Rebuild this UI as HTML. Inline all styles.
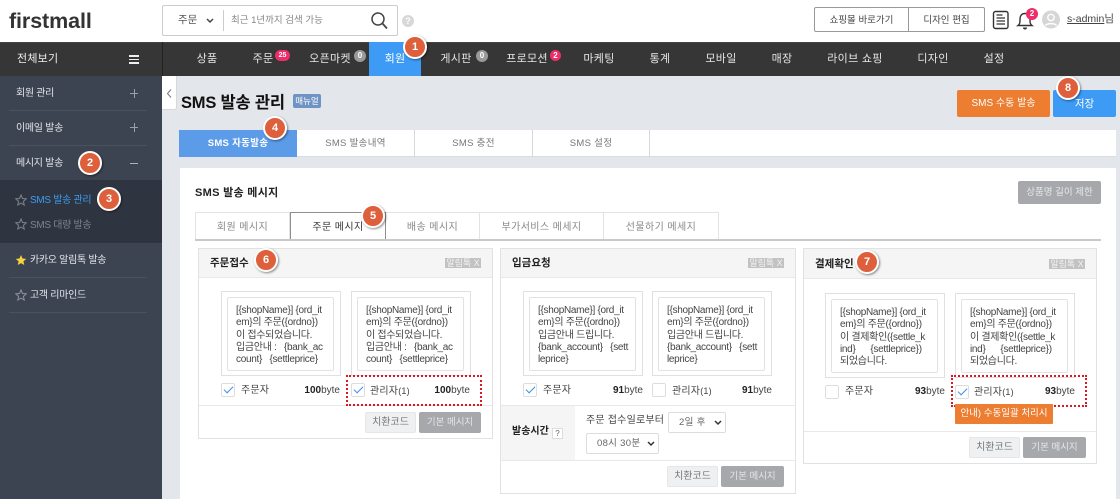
<!DOCTYPE html>
<html lang="ko"><head><meta charset="utf-8"><style>
html,body{margin:0;padding:0;width:1120px;height:499px;overflow:hidden;background:#e3e6ea}
body{position:relative;font-family:"Liberation Sans","Noto Sans CJK KR",sans-serif;font-size:11px;color:#333}
div,span.a,svg.a{position:absolute;box-sizing:border-box}
.c{text-align:center}
.w{white-space:nowrap}
.n{top:42px;height:34px;line-height:34px;color:#e6e6e6;font-size:11px;white-space:nowrap;transform:translateX(-50%);letter-spacing:.3px}
.s{left:16px;color:#e4e6ea;font-size:10px;white-space:nowrap;letter-spacing:-.3px}
.hr{left:9px;width:138px;height:1px;background:#4a5260}
.num{width:24px;height:24px;border-radius:50%;background:#dd5f3c;border:2px solid #fff;color:#fff;font-size:11px;font-weight:bold;text-align:center;line-height:20px;box-shadow:1px 1px 2px rgba(0,0,0,.45);z-index:5;transform:translate(-50%,-50%)}
.tab{top:130px;height:27px;line-height:27px;text-align:center;font-size:9.5px;color:#777;border-right:1px solid #d8d8d8;letter-spacing:.3px}
.sub{top:212px;height:28px;line-height:29px;text-align:center;font-size:10px;color:#888;border:1px solid #e3e3e3;border-left:0;border-bottom:0;letter-spacing:.4px}
.card{background:#fff;border:1px solid #e2e2e2;top:248px}
.hd{left:0;top:0;right:0;background:#f5f5f5;border-bottom:1px solid #e8e8e8}
.ttl{font-weight:bold;font-size:10.5px;color:#222;white-space:nowrap}
.tag{background:#c2c2c2;color:#f2f2f2;font-size:9px;height:10px;line-height:10px;width:36px;text-align:center;white-space:nowrap;overflow:hidden}
.o{border:1px solid #e0e0e0;width:120px;height:85px;background:#fff}
.i{left:5px;top:5px;width:107px;height:74px;border:1px solid #e2e2e2;border-radius:2px;padding:7px 0 0 8px;font-size:10px;letter-spacing:-.3px;line-height:12.35px;color:#444;white-space:nowrap}
.cb{width:14px;height:14px;border:1px solid #ddd;border-radius:2px;background:#fff}
.cb.on::after{content:"";position:absolute;left:2px;top:2px;width:8px;height:4px;border-left:1.5px solid #3a8ee8;border-bottom:1.5px solid #3a8ee8;transform:rotate(-45deg)}
.lb{font-size:10px;color:#444;white-space:nowrap;letter-spacing:.2px}
.by{font-size:10px;color:#444;white-space:nowrap;text-align:right}
.by b{color:#222}
.dv{height:1px;background:#e8e8e8}
.b1,.b2{height:21px;line-height:21px;border-radius:2px;text-align:center;font-size:10px;white-space:nowrap}
.b1{background:#eef0f2;color:#777;border:1px solid #e4e6e8;line-height:19px}
.b2{background:#a6a8ac;color:#e6e6e6;font-size:9.5px}
.red{border:2px dotted #d71920;z-index:3}
.sel{border:1px solid #ddd;border-radius:2px;background:#fff;height:21px;line-height:19px;font-size:9.5px;color:#666;letter-spacing:.3px}
.sel svg{position:absolute;right:3px;top:7px}
</style></head><body>

<div style="left:0;top:0;width:1120px;height:42px;background:#fff"></div>
<div class="w" style="left:9px;top:6px;font-size:21.5px;line-height:30px;font-weight:bold;color:#333;letter-spacing:-.1px">firstmall</div>

<div style="left:162px;top:5px;width:236px;height:31px;border:1px solid #ccc;border-radius:2px;background:#fff"></div>
<div class="w" style="left:178px;top:5px;line-height:31px;font-size:10.5px;color:#555">주문</div>
<svg class="a" style="left:206px;top:18px" width="8" height="6" viewBox="0 0 8 6"><path d="M1 1l3 3 3-3" fill="none" stroke="#444" stroke-width="1.5"/></svg>
<div style="left:223px;top:10px;width:1px;height:21px;background:#ccc"></div>
<div class="w" style="left:231px;top:5px;line-height:31px;font-size:9.5px;color:#888">최근 1년까지 검색 가능</div>
<svg class="a" style="left:370px;top:11px" width="18" height="19" viewBox="0 0 18 19"><circle cx="8" cy="8" r="6" fill="none" stroke="#444" stroke-width="1.5"/><path d="M12.5 12.5l4.5 5" stroke="#444" stroke-width="1.7"/></svg>
<div class="c" style="left:402px;top:15px;width:12px;height:12px;border-radius:50%;background:#d8d8d8;color:#fff;font-size:9px;font-weight:bold;line-height:12px">?</div>

<div style="left:814px;top:7px;width:171px;height:25px;border:1px solid #999;border-radius:2px;background:#fff"></div>
<div style="left:908px;top:7px;width:1px;height:25px;background:#999"></div>
<div class="c w" style="left:815px;top:8px;width:93px;line-height:25px;font-size:9.5px;color:#444">쇼핑몰 바로가기</div>
<div class="c w" style="left:909px;top:8px;width:75px;line-height:25px;font-size:9.5px;color:#444">디자인 편집</div>
<svg class="a" style="left:992px;top:10px" width="18" height="20" viewBox="0 0 18 20"><rect x="1.5" y="1.5" width="14.5" height="17" rx="2" fill="#fff" stroke="#333" stroke-width="1.4"/><path d="M4.500 5h6M4.500 8h8.500M4.500 11h8.500M4.500 14h8.500" stroke="#333" stroke-width="1.200"/></svg>
<svg class="a" style="left:1016px;top:9px" width="18" height="21" viewBox="0 0 18 21"><path d="M2 16.5c2-1.500 2-3 2-6.500 0-3.500 2-5.500 5-5.500s5 2 5 5.500c0 3.500 0 5 2 6.500z" fill="#fff" stroke="#333" stroke-width="1.4"/><path d="M7 18.500a2 2 0 004 0z" fill="#333"/></svg>
<div class="c" style="left:1026px;top:8px;width:12px;height:12px;border-radius:50%;background:#ef2d6b;color:#fff;font-size:8px;font-weight:bold;line-height:12px">2</div>
<svg class="a" style="left:1042px;top:10px" width="18" height="19" viewBox="0 0 18 19"><circle cx="9" cy="9.500" r="9" fill="#d6d6d6"/><circle cx="9" cy="7.500" r="3.200" fill="none" stroke="#fff" stroke-width="1.400"/><path d="M3.500 15.500c1.500-2.500 9.500-2.500 11 0" fill="none" stroke="#fff" stroke-width="1.600"/></svg>
<div class="w" style="left:1067px;top:11px;line-height:16px;font-size:10.5px;color:#444"><span style="text-decoration:underline">s-admin</span>님</div>

<div style="left:0;top:42px;width:1120px;height:34px;background:#363636;border-top:1px solid #444"></div>
<div class="w" style="left:17px;top:42px;line-height:34px;color:#eee;font-size:11px;letter-spacing:.2px">전체보기</div>
<div style="left:129px;top:55px;width:10px;height:1.500px;background:#eee"></div>
<div style="left:129px;top:58.500px;width:10px;height:1.500px;background:#eee"></div>
<div style="left:129px;top:62px;width:10px;height:1.500px;background:#eee"></div>
<div style="left:162px;top:42px;width:1px;height:34px;background:#222"></div>
<div style="left:369px;top:42px;width:52px;height:34px;background:#3d9bf5"></div>

<div class="n" style="left:207px">상품</div>
<div class="n" style="left:263px">주문</div>
<div class="c" style="left:275px;top:50px;width:15px;height:11px;border-radius:6px;background:#ef2d6b;color:#fff;font-size:7px;font-weight:bold;line-height:11px">25</div>
<div class="n" style="left:330px">오픈마켓</div>
<div class="c" style="left:354px;top:50px;width:12px;height:12px;border-radius:50%;background:#9a9a9a;color:#fff;font-size:8px;font-weight:bold;line-height:12px">0</div>
<div class="n" style="left:395px;color:#fff">회원</div>
<div class="n" style="left:456px">게시판</div>
<div class="c" style="left:476px;top:50px;width:12px;height:12px;border-radius:50%;background:#9a9a9a;color:#fff;font-size:8px;font-weight:bold;line-height:12px">0</div>
<div class="n" style="left:527px">프로모션</div>
<div class="c" style="left:550px;top:50px;width:11px;height:11px;border-radius:50%;background:#ef2d6b;color:#fff;font-size:8px;font-weight:bold;line-height:11px">2</div>
<div class="n" style="left:599px">마케팅</div>
<div class="n" style="left:660px">통계</div>
<div class="n" style="left:721px">모바일</div>
<div class="n" style="left:782px">매장</div>
<div class="n" style="left:855px">라이브 쇼핑</div>
<div class="n" style="left:933px">디자인</div>
<div class="n" style="left:994px">설정</div>

<div style="left:0;top:76px;width:162px;height:423px;background:#3c4452"></div>
<div class="s" style="top:85px;line-height:18px">회원 관리</div>
<div style="left:130px;top:93px;width:8px;height:1px;background:#9aa0aa"></div><div style="left:134px;top:89px;width:1px;height:9px;background:#9aa0aa"></div>
<div class="hr" style="top:110px"></div>
<div class="s" style="top:120px;line-height:18px">이메일 발송</div>
<div style="left:130px;top:127px;width:8px;height:1px;background:#9aa0aa"></div><div style="left:134px;top:123px;width:1px;height:9px;background:#9aa0aa"></div>
<div class="hr" style="top:145px"></div>
<div class="s" style="top:155px;line-height:18px">메시지 발송</div>
<div style="left:130px;top:163px;width:8px;height:1px;background:#aab0ba"></div>
<div style="left:0;top:180px;width:162px;height:63px;background:#2f3540"></div>
<svg class="a" style="left:15px;top:194px" width="12" height="12" viewBox="0 0 24 24"><path d="M12 2l3 7 7.500.7-5.700 5 1.700 7.300L12 18.200 5.500 22l1.700-7.300-5.700-5L9 9z" fill="none" stroke="#7d838d" stroke-width="2"/></svg>
<div class="w" style="left:30px;top:192px;line-height:18px;font-size:10px;color:#3d9bf5;letter-spacing:-.3px">SMS 발송 관리</div>
<svg class="a" style="left:15px;top:218px" width="12" height="12" viewBox="0 0 24 24"><path d="M12 2l3 7 7.500.7-5.700 5 1.700 7.300L12 18.200 5.500 22l1.700-7.300-5.700-5L9 9z" fill="none" stroke="#7d838d" stroke-width="2"/></svg>
<div class="w" style="left:30px;top:217px;line-height:18px;font-size:10px;color:#7d838d;letter-spacing:-.3px">SMS 대량 발송</div>
<svg class="a" style="left:15px;top:254px" width="12" height="12" viewBox="0 0 24 24"><path d="M12 2l3 7 7.500.7-5.700 5 1.700 7.300L12 18.200 5.500 22l1.700-7.300-5.700-5L9 9z" fill="#f7d23e"/></svg>
<div class="s" style="left:30px;top:252px;line-height:18px">카카오 알림톡 발송</div>
<div class="hr" style="top:277px"></div>
<svg class="a" style="left:15px;top:289px" width="12" height="12" viewBox="0 0 24 24"><path d="M12 2l3 7 7.500.7-5.700 5 1.700 7.300L12 18.200 5.500 22l1.700-7.300-5.700-5L9 9z" fill="none" stroke="#8d939d" stroke-width="2"/></svg>
<div class="s" style="left:30px;top:287px;line-height:18px">고객 리마인드</div>
<div class="hr" style="top:312px"></div>

<div style="left:162px;top:76px;width:15px;height:34px;background:#fff;border:1px solid #d8d8d8;border-left:0;border-top:0;border-radius:0 0 3px 0"></div>
<svg class="a" style="left:166px;top:89px" width="7" height="9" viewBox="0 0 7 9"><path d="M5 .5L1.500 4.500 5 8.500" fill="none" stroke="#777" stroke-width="1"/></svg>
<div class="w" style="left:181px;top:90px;line-height:27px;font-size:16.5px;font-weight:bold;color:#111;letter-spacing:-.2px">SMS 발송 관리</div>
<div class="c w" style="left:293px;top:94px;width:28px;height:14px;line-height:14px;background:#6f93c2;color:#fff;font-size:8.500px;border-radius:2px">매뉴얼</div>
<div class="c w" style="left:957px;top:90px;width:93px;height:27px;line-height:28px;background:#ed7d31;color:#fff;border-radius:2px;font-size:10px">SMS 수동 발송</div>
<div class="c w" style="left:1053px;top:90px;width:63px;height:27px;line-height:28px;background:#3d9bf5;color:#fff;border-radius:2px;font-size:10.5px">저장</div>

<div style="left:179px;top:130px;width:937px;height:27px;background:#fff;border-bottom:1px solid #ddd"></div>
<div class="tab" style="left:179px;width:118px;background:#5b9be8;color:#fff;font-weight:bold;border:0">SMS 자동발송</div>
<div class="tab" style="left:297px;width:118px">SMS 발송내역</div>
<div class="tab" style="left:415px;width:118px">SMS 충전</div>
<div class="tab" style="left:533px;width:117px">SMS 설정</div>

<div style="left:180px;top:168px;width:936px;height:331px;background:#fff"></div>
<div class="w" style="left:195px;top:184px;line-height:18px;font-size:11px;font-weight:bold;color:#222;letter-spacing:.3px">SMS 발송 메시지</div>
<div class="c w" style="left:1018px;top:181px;width:83px;height:23px;line-height:23px;background:#a6a8ac;color:#e8e8e8;border-radius:2px;font-size:9.5px">상품명 길이 제한</div>

<div class="sub" style="left:195px;width:95px;border-left:1px solid #e3e3e3">회원 메시지</div>
<div class="sub" style="left:290px;width:96px;border:1px solid #8f8f8f;border-bottom:0;background:#fff;color:#333;z-index:1">주문 메시지</div>
<div class="sub" style="left:386px;width:94px">배송 메시지</div>
<div class="sub" style="left:480px;width:124px">부가서비스 메세지</div>
<div class="sub" style="left:604px;width:115px">선물하기 메세지</div>
<div style="left:195px;top:239px;width:906px;height:2px;background:#c9c9c9;z-index:2"></div>

<!-- Card 1 -->
<div class="card" style="left:198px;width:295px;height:191px">
  <div class="hd" style="height:29px"></div>
  <div class="ttl" style="left:11px;top:5px;line-height:18px">주문접수</div>
  <div class="tag" style="left:246px;top:9px">알림톡 X</div>
  <div class="o" style="left:22px;top:42px"><div class="i">[{shopName}] {ord_it<br>em}의 주문({ordno})<br>이 접수되었습니다.<br>입금안내 :&nbsp;&nbsp;&nbsp;{bank_ac<br>count}&nbsp;&nbsp;&nbsp;{settleprice}</div></div>
  <div class="o" style="left:152px;top:42px"><div class="i">[{shopName}] {ord_it<br>em}의 주문({ordno})<br>이 접수되었습니다.<br>입금안내 :&nbsp;&nbsp;&nbsp;{bank_ac<br>count}&nbsp;&nbsp;&nbsp;{settleprice}</div></div>
  <div class="cb on" style="left:22px;top:134px"></div>
  <div class="lb" style="left:42px;top:134px;line-height:16px">주문자</div>
  <div class="by" style="left:79px;top:134px;width:62px;line-height:16px"><b>100</b>byte</div>
  <div class="cb on" style="left:152px;top:134px"></div>
  <div class="lb" style="left:171px;top:134px;line-height:16px">관리자<span style="font-size:9px">(1)</span></div>
  <div class="by" style="left:209px;top:134px;width:62px;line-height:16px"><b>100</b>byte</div>
  <div class="dv" style="left:0;top:156px;width:293px"></div>
  <div class="b1" style="left:166px;top:163px;width:51px">치환코드</div>
  <div class="b2" style="left:220px;top:163px;width:62px">기본 메시지</div>
</div>
<div class="red" style="left:346px;top:375px;width:136px;height:31px"></div>

<!-- Card 2 -->
<div class="card" style="left:500px;width:296px;height:246px">
  <div class="hd" style="height:29px"></div>
  <div class="ttl" style="left:11px;top:5px;line-height:18px">입금요청</div>
  <div class="tag" style="left:247px;top:9px">알림톡 X</div>
  <div class="o" style="left:22px;top:42px"><div class="i">[{shopName}] {ord_it<br>em}의 주문({ordno})<br>입금안내 드립니다.<br>{bank_account}&nbsp;&nbsp;&nbsp;{sett<br>leprice}</div></div>
  <div class="o" style="left:151px;top:42px"><div class="i">[{shopName}] {ord_it<br>em}의 주문({ordno})<br>입금안내 드립니다.<br>{bank_account}&nbsp;&nbsp;&nbsp;{sett<br>leprice}</div></div>
  <div class="cb on" style="left:22px;top:134px"></div>
  <div class="lb" style="left:42px;top:134px;line-height:16px">주문자</div>
  <div class="by" style="left:80px;top:134px;width:62px;line-height:16px"><b>91</b>byte</div>
  <div class="cb" style="left:151px;top:134px"></div>
  <div class="lb" style="left:171px;top:134px;line-height:16px">관리자<span style="font-size:9px">(1)</span></div>
  <div class="by" style="left:209px;top:134px;width:62px;line-height:16px"><b>91</b>byte</div>
  <div style="left:0;top:156px;width:74px;height:55px;background:#f5f5f5"></div>
  <div class="dv" style="left:0;top:156px;width:294px"></div>
  <div class="dv" style="left:0;top:211px;width:294px"></div>
  <div class="ttl" style="left:11px;top:175px;line-height:16px;font-size:10px">발송시간</div>
  <div class="c" style="left:51px;top:179px;width:11px;height:11px;border:1px solid #ddd;font-size:8px;line-height:9px;color:#666;background:#fff">?</div>
  <div class="w" style="left:85px;top:164px;line-height:16px;font-size:10px;color:#444;letter-spacing:.2px">주문 접수일로부터</div>
  <div class="sel" style="left:167px;top:163px;width:58px;padding-left:10px">2일 후<svg width="8" height="6" viewBox="0 0 8 6"><path d="M1 1l3 3 3-3" fill="none" stroke="#333" stroke-width="1.500"/></svg></div>
  <div class="sel" style="left:85px;top:184px;width:73px;padding-left:10px">08시 30분<svg width="8" height="6" viewBox="0 0 8 6"><path d="M1 1l3 3 3-3" fill="none" stroke="#333" stroke-width="1.500"/></svg></div>
  <div class="b1" style="left:166px;top:217px;width:51px">치환코드</div>
  <div class="b2" style="left:220px;top:217px;width:63px">기본 메시지</div>
</div>

<!-- Card 3 -->
<div class="card" style="left:803px;width:294px;height:216px">
  <div class="hd" style="height:30px"></div>
  <div class="ttl" style="left:11px;top:6px;line-height:18px">결제확인</div>
  <div class="tag" style="left:245px;top:10px">알림톡 X</div>
  <div class="o" style="left:21px;top:44px"><div class="i">[{shopName}] {ord_it<br>em}의 주문({ordno})<br>이 결제확인({settle_k<br>ind}&nbsp;&nbsp;&nbsp;&nbsp;&nbsp;&nbsp;{settleprice})<br>되었습니다.</div></div>
  <div class="o" style="left:151px;top:44px"><div class="i">[{shopName}] {ord_it<br>em}의 주문({ordno})<br>이 결제확인({settle_k<br>ind}&nbsp;&nbsp;&nbsp;&nbsp;&nbsp;&nbsp;{settleprice})<br>되었습니다.</div></div>
  <div class="cb" style="left:21px;top:136px"></div>
  <div class="lb" style="left:41px;top:135px;line-height:16px">주문자</div>
  <div class="by" style="left:79px;top:135px;width:62px;line-height:16px"><b>93</b>byte</div>
  <div class="cb on" style="left:151px;top:136px"></div>
  <div class="lb" style="left:170px;top:135px;line-height:16px">관리자<span style="font-size:9px">(1)</span></div>
  <div class="by" style="left:209px;top:135px;width:62px;line-height:16px"><b>93</b>byte</div>
  <div class="dv" style="left:0;top:182px;width:292px"></div>
  <div class="b1" style="left:165px;top:188px;width:51px">치환코드</div>
  <div class="b2" style="left:219px;top:188px;width:63px">기본 메시지</div>
</div>
<div class="red" style="left:951px;top:375px;width:136px;height:32px"></div>
<div class="c w" style="left:955px;top:404px;width:98px;height:20px;line-height:20px;background:#ed7d31;color:#fff;font-size:9.5px;border-radius:1px;z-index:4">안내) 수동일괄 처리시</div>

<div class="num" style="left:415px;top:47px">1</div>
<div class="num" style="left:90px;top:163px">2</div>
<div class="num" style="left:109px;top:199px">3</div>
<div class="num" style="left:275px;top:128px">4</div>
<div class="num" style="left:373px;top:216px">5</div>
<div class="num" style="left:266px;top:260px">6</div>
<div class="num" style="left:867px;top:262px">7</div>
<div class="num" style="left:1068px;top:88px">8</div>
</body></html>
